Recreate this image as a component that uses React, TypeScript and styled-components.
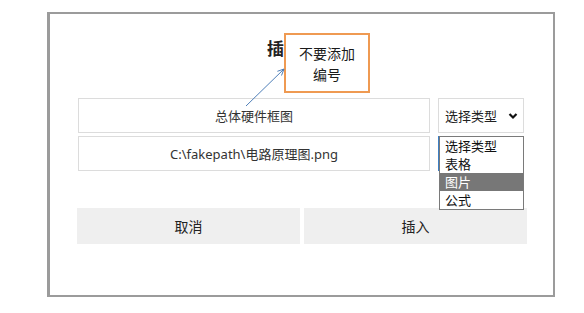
import styled, { createGlobalStyle } from "styled-components";

const GlobalStyle = createGlobalStyle`
  body {
    margin: 0;
    background: #ffffff;
    font-family: "Noto Sans", "Noto Sans CJK SC", sans-serif;
  }
`;

const Page = styled.div`
  width: 584px;
  height: 313px;
  padding: 12px 0 0 47px;
  box-sizing: border-box;
`;

const Modal = styled.div`
  position: relative;
  width: 508px;
  height: 285px;
  box-sizing: border-box;
  border: 2px solid #9b9b9b;
  border-left-width: 3px;
  padding: 24px 29px 0 28px;
  display: flex;
  flex-direction: column;
  background: #ffffff;
`;

const Title = styled.h3`
  margin: 0;
  height: 20px;
  line-height: 20px;
  text-align: center;
  font-size: 17px;
  font-weight: 700;
  color: #222222;
  font-family: "Noto Sans CJK SC", sans-serif;
`;

const Form = styled.div`
  margin-top: 40px;
  display: flex;
  flex-direction: column;
  gap: 3px;
`;

const Row = styled.div`
  display: flex;
  gap: 8px;
  height: 35px;
`;

const Field = styled.div`
  flex: 1;
  box-sizing: border-box;
  border: 1px solid #dcdcdc;
  display: flex;
  align-items: center;
  justify-content: center;
  font-size: 13px;
  color: #333333;
`;

const SelectBox = styled.div<{ $focused?: boolean }>`
  position: relative;
  width: 86px;
  box-sizing: border-box;
  border: 1px solid ${(p) => (p.$focused ? "#3d7fc4" : "#dcdcdc")};
  display: flex;
  align-items: center;
  justify-content: space-between;
  padding: 0 5px 0 6px;
  font-size: 13px;
  color: #222222;
`;

const Chevron = styled.svg`
  width: 10px;
  height: 8px;
`;

const OptionList = styled.ul`
  position: absolute;
  top: -1px;
  left: 0;
  right: -1px;
  margin: 0;
  padding: 0;
  list-style: none;
  background: #ffffff;
  border: 1px solid #7a7a7a;
  z-index: 2;
`;

const OptionItem = styled.li<{ $active?: boolean }>`
  height: 18px;
  line-height: 18px;
  padding-left: 5px;
  font-size: 13px;
  color: ${(p) => (p.$active ? "#ffffff" : "#111111")};
  background: ${(p) => (p.$active ? "#777777" : "transparent")};
`;

const Actions = styled.div`
  margin: 37px -3px 0 -1px;
  display: flex;
  gap: 4px;
`;

const Button = styled.button`
  flex: 1;
  height: 36px;
  border: none;
  background: #efefef;
  font-family: "Noto Sans CJK SC", sans-serif;
  font-size: 14px;
  color: #222222;
  padding: 0;
`;

const Callout = styled.div`
  position: absolute;
  left: 234px;
  top: 19px;
  width: 86px;
  height: 60px;
  box-sizing: border-box;
  border: 2px solid #ef9a52;
  background: #ffffff;
  padding-top: 8px;
  text-align: center;
  font-family: "Noto Sans CJK SC", sans-serif;
  font-weight: 400;
  font-size: 14px;
  line-height: 21px;
  color: #1a1a1a;
  z-index: 3;
`;

const Pointer = styled.svg`
  position: absolute;
  left: 187px;
  top: 50px;
  width: 50px;
  height: 50px;
  overflow: visible;
  z-index: 3;
`;

const options = ["选择类型", "表格", "图片", "公式"];

const ChevronDown = () => (
  <Chevron viewBox="0 0 10 8">
    <path d="M1.5 2 L5 5.5 L8.5 2" fill="none" stroke="#111" strokeWidth="2.2" />
  </Chevron>
);

export default function App() {
  return (
    <>
      <GlobalStyle />
      <Page>
        <Modal>
          <Title>插入图表</Title>
          <Form>
            <Row>
              <Field>总体硬件框图</Field>
              <SelectBox>
                <span>选择类型</span>
                <ChevronDown />
              </SelectBox>
            </Row>
            <Row>
              <Field>C:\fakepath\电路原理图.png</Field>
              <SelectBox $focused>
                <OptionList>
                  {options.map((o) => (
                    <OptionItem key={o} $active={o === "图片"}>
                      {o}
                    </OptionItem>
                  ))}
                </OptionList>
              </SelectBox>
            </Row>
          </Form>
          <Actions>
            <Button>取消</Button>
            <Button>插入</Button>
          </Actions>
          <Callout>
            不要添加
            <br />
            编号
          </Callout>
          <Pointer viewBox="0 0 50 50">
            <path d="M9 42 L47 5" stroke="#4f7fb8" strokeWidth="1" fill="none" />
            <path d="M40.4 7.3 L47 5 L44.5 11.5" stroke="#4f7fb8" strokeWidth="1" fill="none" />
          </Pointer>
        </Modal>
      </Page>
    </>
  );
}
